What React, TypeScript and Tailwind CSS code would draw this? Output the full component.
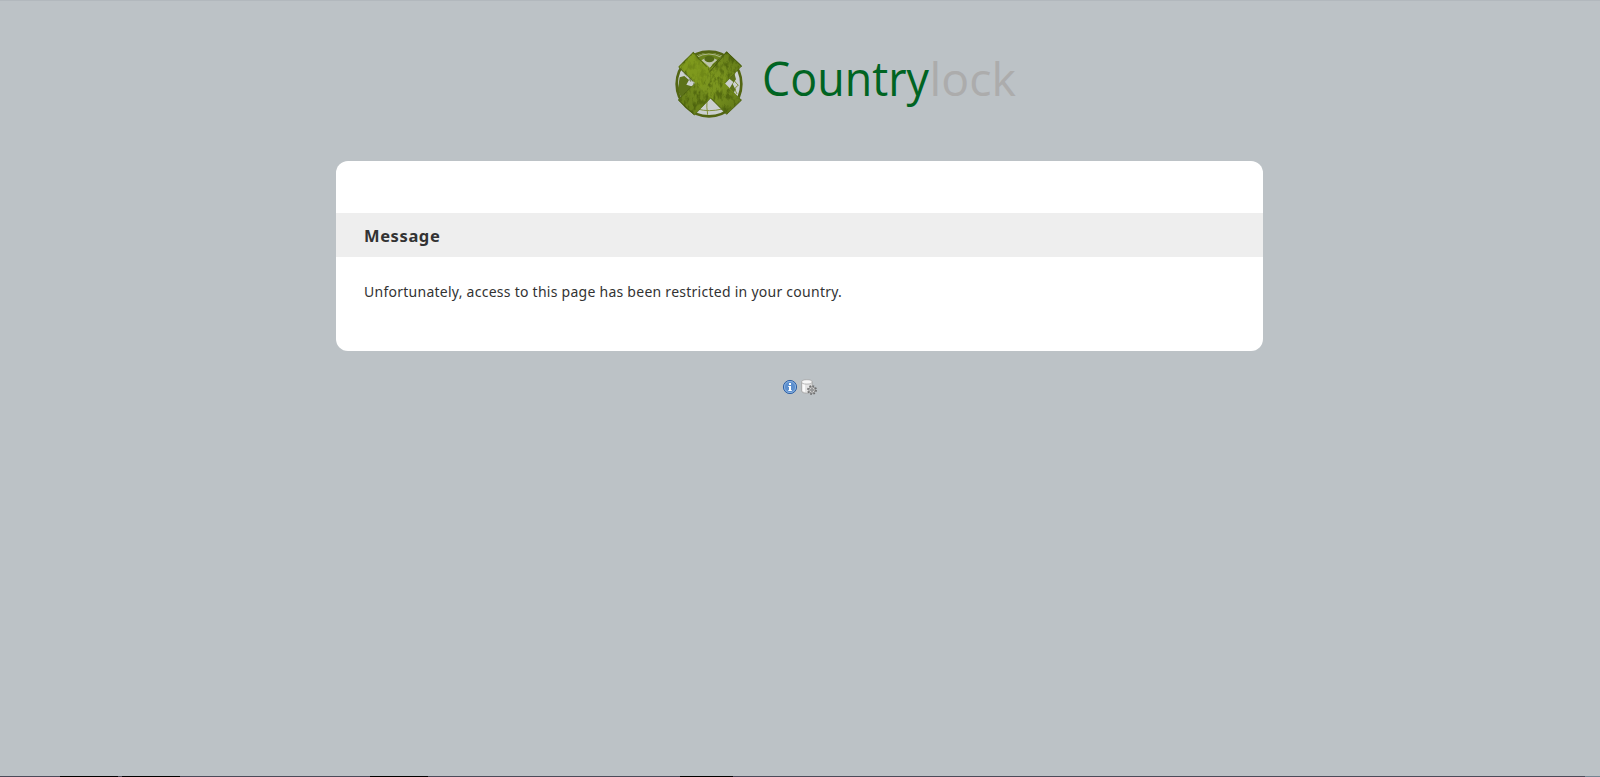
function Logo() {
  return (
    <svg className="ml-[660px] block h-[90px] w-[370px]" viewBox="0 0 370 90" role="img" aria-label="Countrylock">
      <defs>
        <filter id="grunge" x="0" y="0" width="100%" height="100%" colorInterpolationFilters="sRGB">
          <feTurbulence type="fractalNoise" baseFrequency="0.09 0.045" numOctaves="4" seed="11" result="n" />
          <feColorMatrix in="n" type="matrix" values="0 0 0 0 0.25  0 0 0 0 0.33  0 0 0 0 0.03  3.5 0 0 0 -1.5" />
          <feComposite in2="SourceGraphic" operator="in" />
        </filter>
        <linearGradient id="fade" x1="0" y1="0" x2="1" y2="1">
          <stop offset="0.1" stopColor="#7e981e" />
          <stop offset="0.6" stopColor="#7a941f" />
          <stop offset="1" stopColor="#5b7216" />
        </linearGradient>
        <linearGradient id="fade2" x1="1" y1="0" x2="0" y2="1">
          <stop offset="0" stopColor="#5b7216" />
          <stop offset="0.35" stopColor="#7a941f" />
          <stop offset="1" stopColor="#627a17" />
        </linearGradient>
      </defs>
      <g transform="scale(0.33333)">
        <circle cx="147" cy="132" r="94" fill="#cbd0d0" />
        <g fill="none" stroke="#829039" strokeWidth="3">
          <path d="M141 178q-2 24 2 46M112 207q35 10 75 0M225 100q-14 14 10 36q-16 6-4 26" />
        </g>
        <path d="M59 112l14-4 14 12-8 14 20 6-6 34-26 6-14-30zM222 96l-14 20 12 10 -12 20 12 16 6-14-8-16 10-14z" fill="#5c721a" />
        <path d="M104 50q22-12 43-12t43 12l-12 42-32 20-34-26z" fill="#6b841d" />
        <path d="M122 62q24-20 50-2q-14 10-22 24q-12-14-28-22z" fill="#bcc3ab" />
        <ellipse cx="148" cy="57" rx="15" ry="10" fill="#536a16" />
        <path d="M110 52q36-20 74 0" fill="none" stroke="#aeb78c" strokeWidth="3" />
        <circle cx="147" cy="132" r="97" fill="none" stroke="#536513" strokeWidth="8" />
        <path d="M200 35l45 43-142 147-48-45z" fill="url(#fade2)" stroke="#4d6411" strokeWidth="2" />
        <path d="M100 36l145 144-45 43L55 80z" fill="url(#fade)" />
        <path d="M56 81l44-44 40 44M245 180l-45 43-49-50" fill="none" stroke="#485c11" strokeWidth="2.5" />
        <path d="M57 82l43 43M151 94l49-58 45 43M55 180l48 44" fill="none" stroke="#4b5f12" strokeWidth="3" />
        <path d="M100 36l47 47 53-48 45 43-55 55 55 47-45 43-50-50-47 52-48-45 43-47-43-53z" fill="#415407" filter="url(#grunge)" opacity="0.6" />
        <path d="M100 42l48 52-22 48-62-62z" fill="#809b1d" opacity="0.6" />
      </g>
      <g fontFamily="'Open Sans', 'Noto Sans', sans-serif">
        <text transform="translate(102 55.5) scale(0.934 1)" fontSize="48" fill="#006422">Country</text>
        <text x="269.5" y="56" fontSize="46.5" fill="#acacac">lock</text>
      </g>
    </svg>
  );
}

function InfoIcon() {
  return (
    <svg className="size-4" viewBox="0 0 16 16" aria-label="Info">
      <circle cx="8" cy="8" r="6.6" fill="#5c8fce" stroke="#2f62a6" strokeWidth="1" />
      <circle cx="8" cy="8" r="5.6" fill="none" stroke="#8fb3e0" strokeWidth="0.9" />
      <path d="M7 4h2v2H7zM6.3 7H9v4h.8v1H6.3v-1H7V8h-.7z" fill="#fff" />
    </svg>
  );
}

function DatabaseGearIcon() {
  return (
    <svg className="size-4" viewBox="0 0 16 16" aria-label="Database settings">
      <path d="M.6 2.9v9c0 1.5 2.3 2.3 5 2.3s5.6-.8 5.6-2.3v-9z" fill="#e4e4e4" stroke="#a0a0a0" strokeWidth="0.8" />
      <path d="M1.6 4.5v7.6l2.4 1V5z" fill="#fafafa" />
      <ellipse cx="5.9" cy="2.9" rx="5.3" ry="2.2" fill="#f6f6f6" stroke="#a8a8a8" strokeWidth="0.8" />
      <circle cx="11" cy="11" r="4" fill="none" stroke="#6c6c6c" strokeWidth="1.8" strokeDasharray="1.6 1.54" />
      <circle cx="11" cy="11" r="3.2" fill="#d4d4d4" stroke="#747474" strokeWidth="0.8" />
      <circle cx="11" cy="11" r="1.3" fill="#c4c8cb" stroke="#666" strokeWidth="0.8" />
    </svg>
  );
}

export default function App() {
  return (
    <div className="flex h-[777px] w-[1600px] flex-col overflow-hidden border-t border-[#b2b8bd] bg-[#bcc2c6] font-['Noto_Sans','Open_Sans',sans-serif] text-[#333]">
      <header className="pt-[39px]">
        <Logo />
      </header>
      <main className="mt-[31px] ml-[336px] h-[190px] w-[927px] shrink-0 overflow-hidden rounded-[12px] bg-white pt-[52px]">
        <h1 className="h-11 bg-[#eee] pl-7 text-[16.5px] leading-[45px] font-bold tracking-[0.6px]">Message</h1>
        <p className="pt-[23px] pl-7 text-[14px] leading-6 tracking-[0.26px]">
          Unfortunately, access to this page has been restricted in your country.
        </p>
      </main>
      <footer className="mt-7 ml-[782px] flex gap-[3px]">
        <InfoIcon />
        <DatabaseGearIcon />
      </footer>
      <div className="mt-auto flex h-px shrink-0 bg-[#4b4b59]">
        <i className="ml-[60px] w-[58px] bg-black" />
        <i className="ml-1 w-[58px] bg-black" />
        <i className="ml-[190px] w-[58px] bg-black" />
        <i className="ml-[252px] w-[53px] bg-black" />
        <i className="ml-auto w-[15px] bg-[#748491]" />
      </div>
    </div>
  );
}
